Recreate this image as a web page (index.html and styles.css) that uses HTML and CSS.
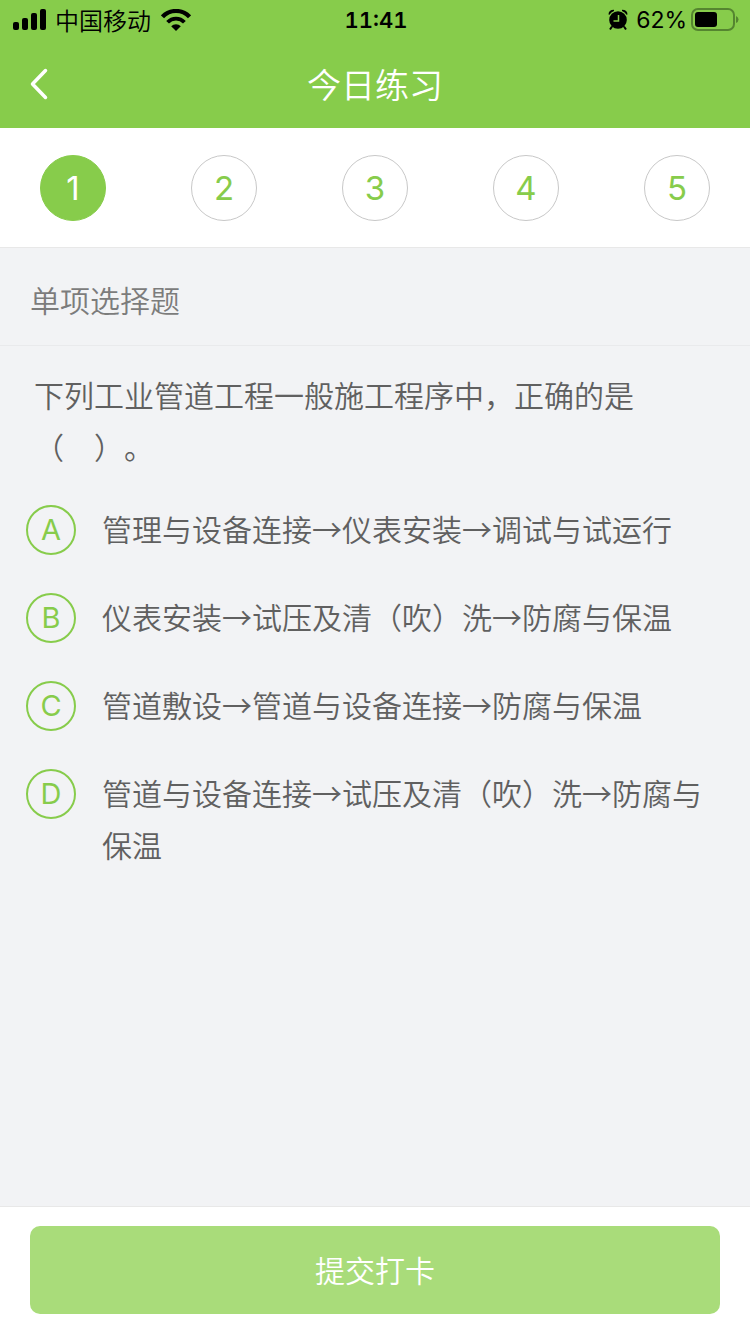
FILE: index.html
```html
<!DOCTYPE html>
<html lang="zh-CN">
<head>
    <meta charset="UTF-8">
    <meta name="viewport" content="width=device-width, initial-scale=1.0">
    <title>今日练习</title>
    <link rel="stylesheet" href="styles.css">
</head>
<body>
    <header class="header">
        <div class="status-bar">
            <div class="status-left">
                <svg class="signal" width="34" height="22" viewBox="0 0 34 22">
                    <rect x="0" y="13" width="6" height="8" rx="2"/>
                    <rect x="9" y="9" width="6" height="12" rx="2"/>
                    <rect x="18" y="4" width="6" height="17" rx="2"/>
                    <rect x="27" y="0" width="6" height="21" rx="2"/>
                </svg>
                <span class="carrier">中国移动</span>
                <svg class="wifi" width="30" height="22" viewBox="0 0 30 22">
                    <path d="M1.500 7.800A18.500 18.500 0 0 1 28.500 7.800" fill="none" stroke="#000" stroke-width="4.200"/>
                    <path d="M6.600 13.200A11.500 11.500 0 0 1 23.400 13.200" fill="none" stroke="#000" stroke-width="3.800"/>
                    <path d="M10.200 17.200A6.600 6.600 0 0 1 19.800 17.200L15 22Z"/>
                </svg>
            </div>
            <time class="clock">11:41</time>
            <div class="status-right">
                <svg class="alarm" width="20" height="22" viewBox="0 0 20 22">
                    <circle cx="10" cy="11" r="8.800"/>
                    <path d="M0.500 5.500Q0.500 1 6 0.800L6 2Q3 3 1.500 5.800ZM19.500 5.500Q19.500 1 14 0.800L14 2Q17 3 18.500 5.800Z"/>
                    <path d="M4 17.500L2 20.500M16 17.500L18 20.500" stroke="#000" stroke-width="2"/>
                    <path d="M10.500 6V12H5.500" fill="none" stroke="#87cc4b" stroke-width="1.500"/>
                </svg>
                <span class="percent">62%</span>
                <svg class="battery" width="48" height="24" viewBox="0 0 48 24">
                    <rect x="1" y="1" width="42" height="21" rx="6" fill="none" stroke="#558530" stroke-width="2"/>
                    <rect x="4" y="4" width="22" height="15" rx="3"/>
                    <path d="M45 8Q47.500 9 47.500 11.500Q47.500 14 45 15Z" fill="#558530"/>
                </svg>
            </div>
        </div>
        <nav class="navbar">
            <button class="back" type="button" aria-label="返回">
                <svg width="18" height="32" viewBox="0 0 18 32">
                    <path d="M15.500 2.500L2.500 16L15.500 29.500" fill="none" stroke="#fff" stroke-width="3.500" stroke-linecap="round" stroke-linejoin="round"/>
                </svg>
            </button>
            <h1 class="title">今日练习</h1>
        </nav>
    </header>

    <div class="steps">
        <button class="step active" type="button">1</button>
        <button class="step" type="button">2</button>
        <button class="step" type="button">3</button>
        <button class="step" type="button">4</button>
        <button class="step" type="button">5</button>
    </div>

    <main class="content">
        <h2 class="section-title">单项选择题</h2>
        <form class="quiz" id="quiz">
            <p class="question">下列工业管道工程一般施工程序中，正确的是<br>（　）。</p>
            <div class="options">
                <label class="option">
                    <span class="badge"><input type="radio" name="answer" value="A"><span>A</span></span>
                    <span class="option-text">管理与设备连接→仪表安装→调试与试运行</span>
                </label>
                <label class="option">
                    <span class="badge"><input type="radio" name="answer" value="B"><span>B</span></span>
                    <span class="option-text">仪表安装→试压及清（吹）洗→防腐与保温</span>
                </label>
                <label class="option">
                    <span class="badge"><input type="radio" name="answer" value="C"><span>C</span></span>
                    <span class="option-text">管道敷设→管道与设备连接→防腐与保温</span>
                </label>
                <label class="option">
                    <span class="badge"><input type="radio" name="answer" value="D"><span>D</span></span>
                    <span class="option-text">管道与设备连接→试压及清（吹）洗→防腐与保温</span>
                </label>
            </div>
        </form>
    </main>

    <footer class="footer">
        <button class="submit" type="submit" form="quiz">提交打卡</button>
    </footer>
</body>
</html>
```

FILE: styles.css
```css
* {
    margin: 0;
    padding: 0;
    box-sizing: border-box;
}
body {
    min-height: 100vh;
    display: flex;
    flex-direction: column;
    background: #f2f3f5;
    color: #606060;
    font-family: "Noto Sans CJK SC", sans-serif;
    font-size: 30px;
    font-weight: 350;
    text-spacing-trim: space-all; /* Keep full-width punctuation */
}
button {
    border: none;
    background: none;
    font: inherit;
    cursor: pointer;
}
svg {
    display: block;
}

/* Header */
.header {
    background: #87cc4b;
}
.status-bar {
    display: grid;
    grid-template-columns: 1fr auto 1fr;
    align-items: center;
    height: 40px;
    padding: 0 11px 0 13px;
    color: #000;
    font-size: 24px;
    line-height: 40px;
}
.status-left,
.status-right {
    display: flex;
    align-items: center;
}
.status-left {
    gap: 8px;
}
.wifi {
    margin-left: 2px;
}
.status-right {
    justify-content: flex-end;
    gap: 4px;
}
.alarm {
    margin-right: 4px;
}
.clock,
.percent {
    font-family: Inter, sans-serif;
    font-size: 23px;
}
.clock {
    font-size: 22px;
    font-weight: 600;
    font-variant-numeric: tabular-nums;
}
.percent {
    font-weight: 400;
}
.navbar {
    display: grid;
    grid-template-columns: 60px 1fr 60px;
    align-items: center;
    height: 88px;
}
.back {
    padding-left: 30px;
}
.title {
    color: #fff;
    font-size: 34px;
    font-weight: 350;
    line-height: 52px;
    text-align: center;
}

/* Question numbers */
.steps {
    display: flex;
    justify-content: space-between;
    padding: 27px 40px 26px;
    background: #fff;
    border-bottom: 1px solid #e8e8e8;
}
.step {
    width: 66px;
    height: 66px;
    border: 1px solid #c8c8c8;
    border-radius: 50%;
    color: #87cc4b;
    font-family: Inter, sans-serif;
    font-size: 33px;
    font-weight: 400;
}
.step.active {
    border-color: #87cc4b;
    background: #87cc4b;
    color: #fff;
}

/* Question */
.content {
    flex: 1;
}
.section-title {
    padding: 25px 30px 20px;
    border-bottom: 1px solid #e9eaec;
    color: #7c7c7c;
    font-size: 30px;
    font-weight: 350;
    line-height: 52px;
}
.quiz {
    padding: 22px 30px 24px 26px;
    line-height: 52px;
}
.question {
    padding-left: 8px;
}
.options {
    display: flex;
    flex-direction: column;
    gap: 32px;
    margin-top: 30px;
}
.option {
    display: flex;
    align-items: flex-start;
    gap: 26px;
    cursor: pointer;
}
.badge {
    display: grid;
    flex: none;
    place-items: center;
    width: 50px;
    height: 56px;
    color: #87cc4b;
    font-family: Inter, sans-serif;
    font-size: 29px;
    font-weight: 400;
}
.badge > * {
    grid-area: 1 / 1; /* Letter sits inside the radio circle */
}
.badge input {
    appearance: none;
    width: 50px;
    height: 50px;
    border: 2px solid #87cc4b;
    border-radius: 50%;
}
.badge input:checked {
    background: #87cc4b;
}
.badge input:checked + span {
    color: #fff;
}

/* Submit */
.footer {
    padding: 19px 30px 20px;
    border-top: 1px solid #e8e8e8;
    background: #fff;
}
.submit {
    display: block;
    width: 100%;
    height: 88px;
    padding-bottom: 3px;
    border-radius: 10px;
    background: #a9dc7a;
    color: #fff;
}
```
